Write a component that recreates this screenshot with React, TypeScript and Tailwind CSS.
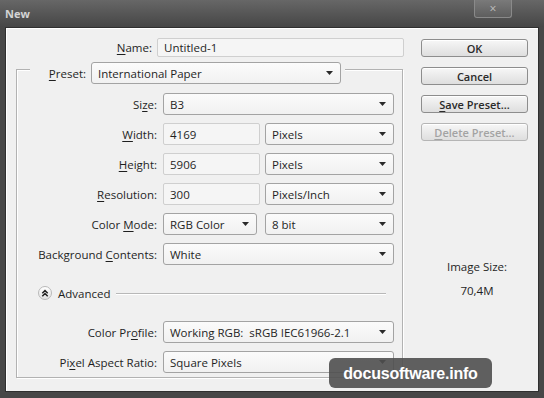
import React from 'react';

const font = { fontFamily: '"Open Sans", "Noto Sans", sans-serif' };

// 带下划线快捷键的标签
function Label({ text, u, className = '' }: { text: string; u: number; className?: string }) {
  return (
    <span className={`text-[11.5px] text-[#1f1f1f] whitespace-nowrap ${className}`}>
      {text.slice(0, u)}
      <span className="underline underline-offset-2">{text[u]}</span>
      {text.slice(u + 1)}
    </span>
  );
}

function Arrow() {
  return (
    <svg width="7" height="4" viewBox="0 0 7 4" className="shrink-0">
      <path d="M0 0 L7 0 L3.5 4 Z" fill="#2a2a2a" />
    </svg>
  );
}

function Select({ value, w }: { value: string; w: string }) {
  return (
    <div
      className={`${w} h-[22px] flex items-center justify-between pl-[6px] pr-[7px] rounded-[3px] border border-[#a3a3a3] bg-gradient-to-b from-[#fbfbfb] to-[#f1f1f1] text-[11.5px] text-[#1f1f1f]`}
    >
      <span className="whitespace-pre">{value}</span>
      <Arrow />
    </div>
  );
}

function Field({ value, w, h = 'h-[22px]' }: { value: string; w: string; h?: string }) {
  return (
    <div className={`${w} ${h} flex items-center pl-[6px] rounded-[2px] border border-[#cfcfcf] bg-[#f5f5f5] text-[11.5px] text-[#1f1f1f]`}>
      {value}
    </div>
  );
}

function Row({ children }: { children: React.ReactNode }) {
  return <div className="flex items-center gap-[6px] h-[22px]">{children}</div>;
}

function Btn({ children, disabled = false }: { children: React.ReactNode; disabled?: boolean }) {
  return (
    <div
      className={`w-[107px] h-[18px] flex items-center justify-center rounded-[3px] border ${
        disabled ? 'border-[#b5b5b5] text-[#a3a3a3]' : 'border-[#8d8d8d] text-[#2a2a2a]'
      } bg-gradient-to-b from-[#f7f7f7] to-[#dedede] text-[11px] font-semibold shadow-[inset_0_1px_0_#ffffff]`}
    >
      {children}
    </div>
  );
}

export default function App() {
  return (
    <div
      className="w-[544px] h-[398px] bg-[#474747] flex flex-col relative overflow-hidden text-[11.5px] leading-[15px]"
      style={font}
    >
      {/* 标题栏 */}
      <div className="h-[27px] flex items-start justify-between bg-gradient-to-b from-[#676767] to-[#464646]">
        <span className="ml-[5px] mt-[6px] text-[11px] font-bold text-[#d4d4d4]">New</span>
        <div className="mr-[32px] w-[38px] h-[18px] flex items-center justify-center rounded-b-[3px] border border-t-0 border-[#8a8a8a] bg-gradient-to-b from-[#7a7a7a] to-[#5e5e5e] text-[12px] text-[#c0c0c0]">
          ×
        </div>
      </div>

      {/* 主体 */}
      <div className="mx-[5px] h-[365px] bg-[#f0f0f0] border border-[#2f2f2f] shadow-[inset_1px_1px_0_#ffffff] flex pt-[10px]">
        <div className="w-[398px] flex flex-col">
          <div className="flex items-center gap-[5px]">
            <div className="w-[146px] text-right">
              <Label text="Name:" u={0} />
            </div>
            <Field value="Untitled-1" w="w-[247px]" h="h-[19px]" />
          </div>

          {/* 预设分组 */}
          <div className="mt-[12px] ml-[10px] w-[387px] flex flex-col border border-[#b2b2b2] shadow-[inset_1px_1px_0_#ffffff,1px_1px_0_#ffffff] pb-[4px]">
            <div className="-mt-[8px] ml-[13px] w-fit flex items-center gap-[5px] bg-[#f0f0f0] pr-[4px]">
              <div className="w-[56px] text-right">
                <Label text="Preset:" u={0} />
              </div>
              <Select value="International Paper" w="w-[250px]" />
            </div>

            <div className="mt-[9px] flex flex-col gap-[8px]">
              <Row>
                <div className="w-[140px] text-right">
                  <Label text="Size:" u={2} />
                </div>
                <Select value="B3" w="w-[231px]" />
              </Row>
              <Row>
                <div className="w-[140px] text-right">
                  <Label text="Width:" u={0} />
                </div>
                <div className="flex gap-[5px]">
                  <Field value="4169" w="w-[97px]" />
                  <Select value="Pixels" w="w-[129px]" />
                </div>
              </Row>
              <Row>
                <div className="w-[140px] text-right">
                  <Label text="Height:" u={0} />
                </div>
                <div className="flex gap-[5px]">
                  <Field value="5906" w="w-[97px]" />
                  <Select value="Pixels" w="w-[129px]" />
                </div>
              </Row>
              <Row>
                <div className="w-[140px] text-right">
                  <Label text="Resolution:" u={0} />
                </div>
                <div className="flex gap-[5px]">
                  <Field value="300" w="w-[97px]" />
                  <Select value="Pixels/Inch" w="w-[129px]" />
                </div>
              </Row>
              <Row>
                <div className="w-[140px] text-right">
                  <Label text="Color Mode:" u={6} />
                </div>
                <div className="flex gap-[8px]">
                  <Select value="RGB Color" w="w-[94px]" />
                  <Select value="8 bit" w="w-[129px]" />
                </div>
              </Row>
              <Row>
                <div className="w-[140px] text-right">
                  <Label text="Background Contents:" u={11} />
                </div>
                <Select value="White" w="w-[231px]" />
              </Row>
            </div>

            {/* 高级 */}
            <div className="mt-[21px] h-[14px] flex items-center ml-[21px] mr-[16px]">
              <div className="w-[14px] h-[14px] rounded-full border border-[#b9b9b9] bg-gradient-to-b from-[#ffffff] to-[#e2e2e2] flex items-center justify-center">
                <svg width="8" height="8" viewBox="0 0 8 8">
                  <path d="M1.3 4.2 L4 1.5 L6.7 4.2 M1.3 7.2 L4 4.5 L6.7 7.2" fill="none" stroke="#1f1f1f" strokeWidth="1.5" />
                </svg>
              </div>
              <span className="ml-[6px] text-[11.5px] text-[#1f1f1f]">Advanced</span>
              <div className="ml-[5px] flex-1 border-t border-[#b8b8b8] shadow-[0_1px_0_#ffffff]" />
            </div>

            <div className="mt-[21px] flex flex-col gap-[8px]">
              <Row>
                <div className="w-[140px] text-right">
                  <Label text="Color Profile:" u={8} />
                </div>
                <Select value="Working RGB:  sRGB IEC61966-2.1" w="w-[231px]" />
              </Row>
              <Row>
                <div className="w-[140px] text-right">
                  <Label text="Pixel Aspect Ratio:" u={2} />
                </div>
                <Select value="Square Pixels" w="w-[231px]" />
              </Row>
            </div>
          </div>
        </div>

        {/* 右侧按钮 */}
        <div className="ml-[17px] mt-[1px] flex flex-col">
          <div className="flex flex-col gap-[10px]">
            <Btn>OK</Btn>
            <Btn>Cancel</Btn>
            <Btn>
              <span className="underline underline-offset-2">S</span>ave Preset...
            </Btn>
            <Btn disabled>
              <span className="underline underline-offset-2">D</span>elete Preset...
            </Btn>
          </div>
          <div className="mt-[118px] pl-[5px] flex flex-col items-center gap-[9px] text-[11.5px] text-[#1f1f1f]">
            <span>Image Size:</span>
            <span>70,4M</span>
          </div>
        </div>
      </div>

      {/* 水印 */}
      <div className="absolute left-[329px] top-[358px] w-[163px] h-[30px] rounded-[6px] bg-[#4f4f4f]/90 flex items-center justify-center">
        <span className="text-white font-bold text-[16px] tracking-[-0.2px]" style={{ fontFamily: '"Liberation Sans", Arial, sans-serif' }}>
          docusoftware.info
        </span>
      </div>
    </div>
  );
}
